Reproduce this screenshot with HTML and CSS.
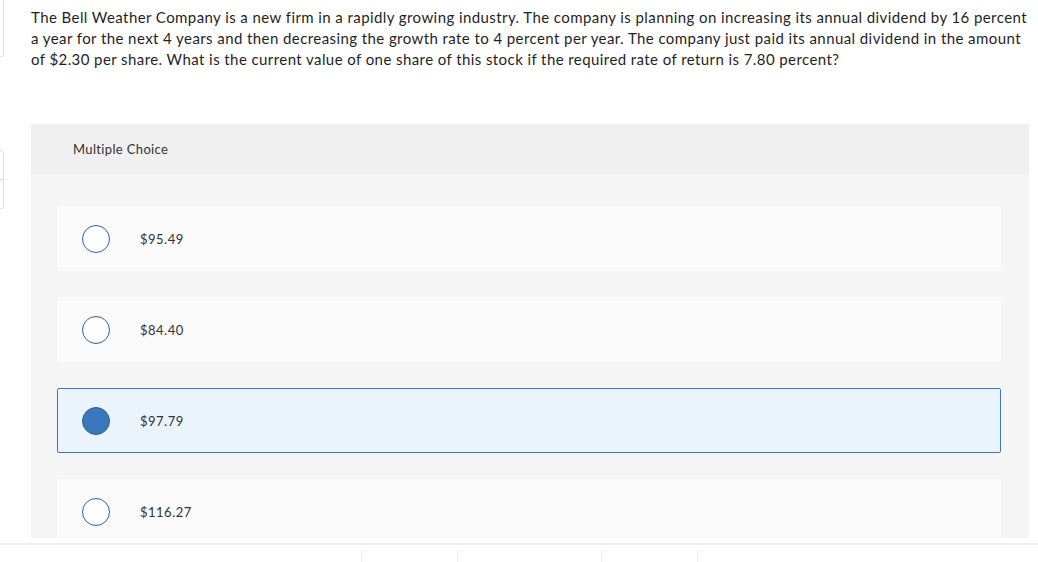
FILE: index.html
```html
<!DOCTYPE html>
<html lang="en">
<head>
<meta charset="utf-8">
<title>Question</title>
<link rel="stylesheet" href="styles.css">
</head>
<body>
<div class="viewport">
  <div class="side-tab side-tab-top"></div>
  <div class="side-tab side-tab-mid"><div class="side-tab-cell"></div><div class="side-tab-cell"></div></div>
  <main class="content">
    <p class="question">The Bell Weather Company is a new firm in a rapidly growing industry. The company is planning on increasing its annual dividend by 16 percent a year for the next 4 years and then decreasing the growth rate to 4 percent per year. The company just paid its annual dividend in the amount of $2.30 per share. What is the current value of one share of this stock if the required rate of return is 7.80 percent?</p>
    <section class="mc">
      <header class="mc-head">Multiple Choice</header>
      <div class="mc-body">
        <label class="option"><span class="radio"></span><span class="option-text">$95.49</span></label>
        <label class="option"><span class="radio"></span><span class="option-text">$84.40</span></label>
        <label class="option option-selected"><span class="radio radio-on"></span><span class="option-text">$97.79</span></label>
        <label class="option"><span class="radio"></span><span class="option-text">$116.27</span></label>
      </div>
    </section>
  </main>
</div>
<footer class="footer">
  <span class="footer-cell footer-a"></span>
  <span class="footer-cell footer-b"></span>
  <span class="footer-cell footer-c"></span>
  <span class="footer-cell footer-d"></span>
</footer>
</body>
</html>
```
FILE: styles.css
```css
* { box-sizing: border-box; }
html, body { margin: 0; padding: 0; background: #fff; }
body {
  font-family: Lato, "Open Sans", "Liberation Sans", sans-serif;
  color: #1f1f1f;
  width: 1038px;
  height: 562px;
  overflow: hidden;
}
.viewport {
  position: relative;
  height: 538px;
  overflow: hidden;
}
.side-tab {
  position: absolute;
  left: -10px;
  width: 14px;
  border: 1px solid #e2e2e2;
  border-radius: 3px;
  background: #fff;
}
.side-tab-top { top: -4px; height: 61px; }
.side-tab-mid { top: 150px; height: 59px; display: flex; flex-direction: column; }
.side-tab-cell { flex: 1; }
.side-tab-cell + .side-tab-cell { border-top: 1px solid #e2e2e2; }
.content {
  padding: 7px 6px 0 31px;
}
.question {
  margin: 0;
  font-size: 15px;
  line-height: 21px;
  letter-spacing: 0.42px;
  color: #1f1f1f;
}
.mc {
  margin-top: 54px;
  margin-right: 3px;
  background: #f5f5f5;
  border-radius: 2px;
}
.mc-head {
  height: 50px;
  display: flex;
  align-items: center;
  padding-left: 42px;
  background: #f0f0f0;
  font-size: 13px;
  letter-spacing: 0.35px;
  color: #333;
}
.mc-body {
  padding: 32px 28px 40px 26px;
  display: flex;
  flex-direction: column;
  gap: 26px;
}
.option {
  height: 65px;
  display: flex;
  align-items: center;
  padding-left: 24px;
  background: #fafafa;
  border: 1px solid transparent;
  border-radius: 2px;
}
.option-selected {
  background: #ebf3fc;
  border-color: #3a78c3;
}
.radio {
  width: 28px;
  height: 28px;
  border-radius: 50%;
  border: 1.5px solid #2e639c;
  background: #fff;
  flex: none;
}
.radio-on {
  background: #3a77bd;
  border-color: #2d619d;
}
.option-text {
  margin-left: 30px;
  font-size: 13px;
  letter-spacing: 0.5px;
  color: #333;
}
.footer {
  position: relative;
  height: 24px;
  margin-top: 5px;
  border-top: 2px solid #efefef;
}
.footer-cell {
  position: absolute;
  top: 5px;
  bottom: 0;
  width: 1px;
  background: #ececec;
}
.footer-a { left: 361px; }
.footer-b { left: 457px; }
.footer-c { left: 601px; }
.footer-d { left: 697px; }
```
